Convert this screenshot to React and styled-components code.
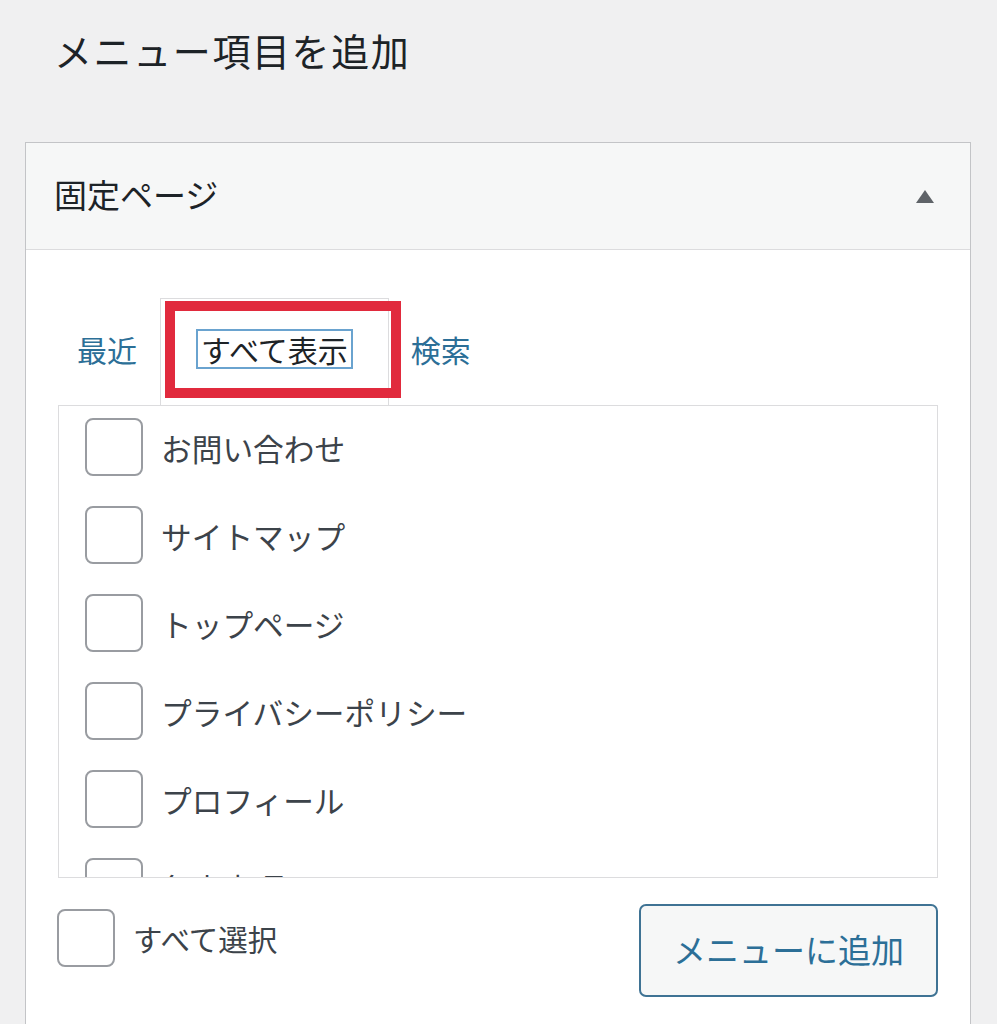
import React from 'react';
import styled, { createGlobalStyle } from 'styled-components';

const GlobalStyle = createGlobalStyle`
  html, body {
    margin: 0;
    padding: 0;
    background: #f0f0f1;
  }
  body {
    font-family: "Noto Sans CJK JP", "Noto Sans", sans-serif;
    color: #1d2327;
  }
`;

const Page = styled.div`
  min-height: 100vh;
  padding: 0 26px 0 25px;
  box-sizing: border-box;
  overflow: hidden;
  background: #f0f0f1;
`;

const Title = styled.h2`
  margin: 0 0 66px;
  padding: 24px 0 0 29px;
  font-size: 38px;
  line-height: 52px;
  font-weight: 400;
  letter-spacing: 1.6px;
  color: #1d2327;
`;

const Panel = styled.section`
  border: 1px solid #c3c4c7;
  background: #fff;
`;

const PanelHeader = styled.div`
  height: 106px;
  display: flex;
  align-items: center;
  justify-content: space-between;
  padding: 0 36px 0 28px;
  background: #f6f7f7;
  border-bottom: 1px solid #dcdcde;
`;

const PanelTitle = styled.h3`
  margin: 0;
  font-size: 33px;
  font-weight: 400;
  color: #1d2327;
  padding-bottom: 4px;
`;

const PanelBody = styled.div`
  padding: 48px 32px 60px;
`;

const Tabs = styled.ul`
  display: flex;
  align-items: stretch;
  height: 107px;
  margin: 0;
  padding: 0;
  list-style: none;
`;

const Tab = styled.li`
  position: relative;
  display: flex;
  align-items: center;
  padding: ${({ $active }) => ($active ? '0 40px 6px 40px' : '0 22px 6px 21px')};
  font-size: 30px;
  color: ${({ $active }) => ($active ? '#1d2327' : '#2c6f97')};
  background: ${({ $active }) => ($active ? '#fff' : 'transparent')};
  border: 1px solid ${({ $active }) => ($active ? '#dcdcde' : 'transparent')};
  border-bottom: none;
  box-sizing: border-box;

  &:first-child {
    padding-left: 18px;
  }
`;

const FocusLabel = styled.span`
  padding: 0 3px;
  line-height: 36px;
  border: 2px solid #6aa3cf;
  margin: 0 -5px;
`;

const Highlight = styled.span`
  position: absolute;
  left: 4px;
  top: 2px;
  width: 236px;
  height: 97px;
  border: 10px solid #e12a3d;
  box-sizing: border-box;
  pointer-events: none;
`;

const ListBox = styled.div`
  height: 473px;
  box-sizing: border-box;
  border: 1px solid #dcdcde;
  padding: 12px 0 0 26px;
  overflow: hidden;
`;

const Row = styled.label`
  display: flex;
  align-items: center;
  gap: 18px;
  height: 58px;
  margin-bottom: 30px;
  font-size: 30.7px;
  color: #3c434a;
`;

const Check = styled.span`
  flex: none;
  width: 58px;
  height: 58px;
  box-sizing: border-box;
  border: 2px solid #999ca1;
  border-radius: 8px;
  background: #fff;
`;

const Footer = styled.div`
  display: flex;
  justify-content: space-between;
  align-items: flex-start;
  margin-top: 26px;
`;

const SelectAll = styled(Row)`
  margin: 5px 0 0 -1px;
  gap: 18px;
  font-size: 29.5px;
`;

const AddButton = styled.button`
  width: 299px;
  height: 93px;
  border: 2px solid #3f7394;
  border-radius: 7px;
  background: #f6f7f7;
  color: #2c6f97;
  font-family: "Noto Sans CJK JP", "Noto Sans", sans-serif;
  font-size: 33px;
  padding: 0 0 4px;
  cursor: pointer;
`;

const pages = [
  'お問い合わせ',
  'サイトマップ',
  'トップページ',
  'プライバシーポリシー',
  'プロフィール',
  '免責事項',
];

export default function App() {
  return (
    <>
      <GlobalStyle />
      <Page>
        <Title>メニュー項目を追加</Title>
        <Panel>
          <PanelHeader>
            <PanelTitle>固定ページ</PanelTitle>
            <svg width="18" height="13" viewBox="0 0 18 13">
              <polygon points="9,0 18,13 0,13" fill="#5f6368" />
            </svg>
          </PanelHeader>
          <PanelBody>
            <Tabs>
              <Tab>最近</Tab>
              <Tab $active>
                <FocusLabel>すべて表示</FocusLabel>
                <Highlight />
              </Tab>
              <Tab>検索</Tab>
            </Tabs>
            <ListBox>
              {pages.map((p) => (
                <Row key={p}>
                  <Check />
                  {p}
                </Row>
              ))}
            </ListBox>
            <Footer>
              <SelectAll>
                <Check />
                すべて選択
              </SelectAll>
              <AddButton>メニューに追加</AddButton>
            </Footer>
          </PanelBody>
        </Panel>
      </Page>
    </>
  );
}
